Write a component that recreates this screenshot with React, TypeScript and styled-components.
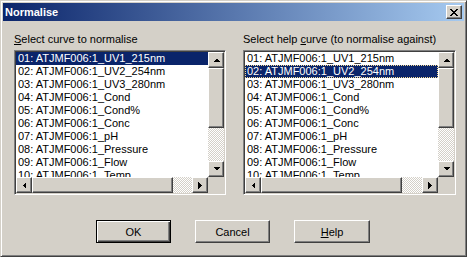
import React from "react";
import styled, { createGlobalStyle } from "styled-components";

const Global = createGlobalStyle`
  html, body { margin: 0; padding: 0; background: #d4d0c8; }
  body { font-family: "Liberation Sans", Arial, sans-serif; font-size: 11px; }
`;

const Window = styled.div`
  box-sizing: border-box;
  width: 467px;
  height: 257px;
  background: #d4d0c8;
  border: 1px solid;
  border-color: #d4d0c8 #404040 #404040 #d4d0c8;
  box-shadow: inset 1px 1px #ffffff, inset -1px -1px #808080;
  padding: 2px;
  display: flex;
  flex-direction: column;
  color: #000;
`;

const TitleBar = styled.div`
  height: 18px;
  display: flex;
  align-items: center;
  justify-content: space-between;
  padding: 0 2px 0 2px;
  background: linear-gradient(to right, #0a246a, #a6caf0);
`;

const Title = styled.span`
  color: #fff;
  font-weight: bold;
  font-size: 11px;
  line-height: 13px;
`;

const Bevel = styled.div`
  box-sizing: border-box;
  background: #d4d0c8;
  border: 1px solid;
  border-color: #ffffff #404040 #404040 #ffffff;
  box-shadow: inset -1px -1px #808080;
  display: flex;
  align-items: center;
  justify-content: center;
`;

const CloseBtn = styled(Bevel)`
  width: 16px;
  height: 14px;
`;

const Body = styled.div`
  display: grid;
  grid-template-columns: 212px 213px;
  column-gap: 17px;
  padding: 12px 0 0 11px;
`;

const Column = styled.div`
  display: flex;
  flex-direction: column;
  gap: 4px;
`;

const Label = styled.div`
  line-height: 13px;
  height: 13px;
  white-space: nowrap;
`;

const U = styled.span`
  text-decoration: underline;
`;

const ListBox = styled.div`
  box-sizing: border-box;
  height: 145px;
  border: 1px solid;
  border-color: #808080 #ffffff #ffffff #808080;
  padding: 1px;
  box-shadow: inset 1px 1px #404040, inset -1px -1px #d4d0c8;
  display: grid;
  grid-template-columns: 1fr 16px;
  grid-template-rows: 1fr 16px;
  background: #d4d0c8;
`;

const Items = styled.div`
  background: #fff;
  overflow: hidden;
`;

const Item = styled.div<{ $sel?: boolean; $focus?: boolean }>`
  height: 13px;
  line-height: 13px;
  padding-left: 2px;
  white-space: nowrap;
  box-sizing: border-box;
  background: ${(p) => (p.$sel ? "#0a246a" : "transparent")};
  color: ${(p) => (p.$sel ? "#fff" : "#000")};
  outline: ${(p) => (p.$focus ? "1px dotted #f5db95" : "none")};
  outline-offset: -1px;
`;

const VScroll = styled.div`
  display: flex;
  flex-direction: column;
`;

const HScroll = styled.div`
  display: flex;
`;

const ScrollBtn = styled(Bevel)`
  width: 16px;
  height: 16px;
  flex: none;
`;

const Thumb = styled(Bevel)<{ $len: number; $vertical?: boolean }>`
  flex: none;
  ${(p) => (p.$vertical ? `height: ${p.$len}px;` : `width: ${p.$len}px;`)}
`;

const Track = styled.div`
  flex: 1;
  background-image: conic-gradient(#d4d0c8 25%, #ffffff 0 50%, #d4d0c8 0 75%, #ffffff 0);
  background-size: 2px 2px;
`;

const Corner = styled.div`
  background: #d4d0c8;
`;

const Buttons = styled.div`
  display: flex;
  gap: 24px;
  padding: 25px 0 0 93px;
`;

const Button = styled.button<{ $default?: boolean; $w: number }>`
  box-sizing: border-box;
  width: ${(p) => p.$w}px;
  height: 23px;
  padding: 0;
  font-family: "Liberation Sans", Arial, sans-serif;
  font-size: 11px;
  color: #000;
  background: #d4d0c8;
  border: 1px solid;
  border-color: ${(p) => (p.$default ? "#000" : "#ffffff #404040 #404040 #ffffff")};
  box-shadow: ${(p) =>
    p.$default
      ? "inset 1px 1px #ffffff, inset -1px -1px #404040, inset -2px -2px #808080"
      : "inset -1px -1px #808080"};
`;

const Arrow = ({ dir }: { dir: "up" | "down" | "left" | "right" }) => {
  const pts: Record<string, string> = {
    up: "0,4 7,4 3.5,0.5",
    down: "0,0 7,0 3.5,3.5",
    left: "4,0 4,7 0.5,3.5",
    right: "0,0 0,7 3.5,3.5",
  };
  const vert = dir === "up" || dir === "down";
  return (
    <svg width={vert ? 7 : 4} height={vert ? 4 : 7} viewBox={vert ? "0 0 7 4" : "0 0 4 7"} shapeRendering="crispEdges">
      <polygon points={pts[dir]} fill="#000" />
    </svg>
  );
};

const items = [
  "01: ATJMF006:1_UV1_215nm",
  "02: ATJMF006:1_UV2_254nm",
  "03: ATJMF006:1_UV3_280nm",
  "04: ATJMF006:1_Cond",
  "05: ATJMF006:1_Cond%",
  "06: ATJMF006:1_Conc",
  "07: ATJMF006:1_pH",
  "08: ATJMF006:1_Pressure",
  "09: ATJMF006:1_Flow",
  "10: ATJMF006:1_Temp",
];

const List = ({ selected, focus }: { selected: number; focus?: boolean }) => (
  <ListBox>
    <Items>
      {items.map((t, i) => (
        <Item key={t} $sel={i === selected} $focus={focus && i === selected}>
          {t}
        </Item>
      ))}
    </Items>
    <VScroll>
      <ScrollBtn><Arrow dir="up" /></ScrollBtn>
      <Thumb $vertical $len={60} />
      <Track />
      <ScrollBtn><Arrow dir="down" /></ScrollBtn>
    </VScroll>
    <HScroll>
      <ScrollBtn><Arrow dir="left" /></ScrollBtn>
      <Thumb $len={141} />
      <Track />
      <ScrollBtn><Arrow dir="right" /></ScrollBtn>
    </HScroll>
    <Corner />
  </ListBox>
);

export default function App() {
  return (
    <>
      <Global />
      <Window>
        <TitleBar>
          <Title>Normalise</Title>
          <CloseBtn>
            <svg width="8" height="7" viewBox="0 0 8 7" shapeRendering="crispEdges">
              <path d="M0 0h2v1h-2zM6 0h2v1h-2zM1 1h2v1h-2zM5 1h2v1h-2zM2 2h4v1h-4zM3 3h2v1h-2zM2 4h4v1h-4zM1 5h2v1h-2zM5 5h2v1h-2zM0 6h2v1h-2zM6 6h2v1h-2z" fill="#000" />
            </svg>
          </CloseBtn>
        </TitleBar>
        <Body>
          <Column>
            <Label><U>S</U>elect curve to normalise</Label>
            <List selected={0} />
          </Column>
          <Column>
            <Label>Select help <U>c</U>urve (to normalise against)</Label>
            <List selected={1} focus />
          </Column>
        </Body>
        <Buttons>
          <Button $default $w={75}>OK</Button>
          <Button $w={75}>Cancel</Button>
          <Button $w={76}><U>H</U>elp</Button>
        </Buttons>
      </Window>
    </>
  );
}
